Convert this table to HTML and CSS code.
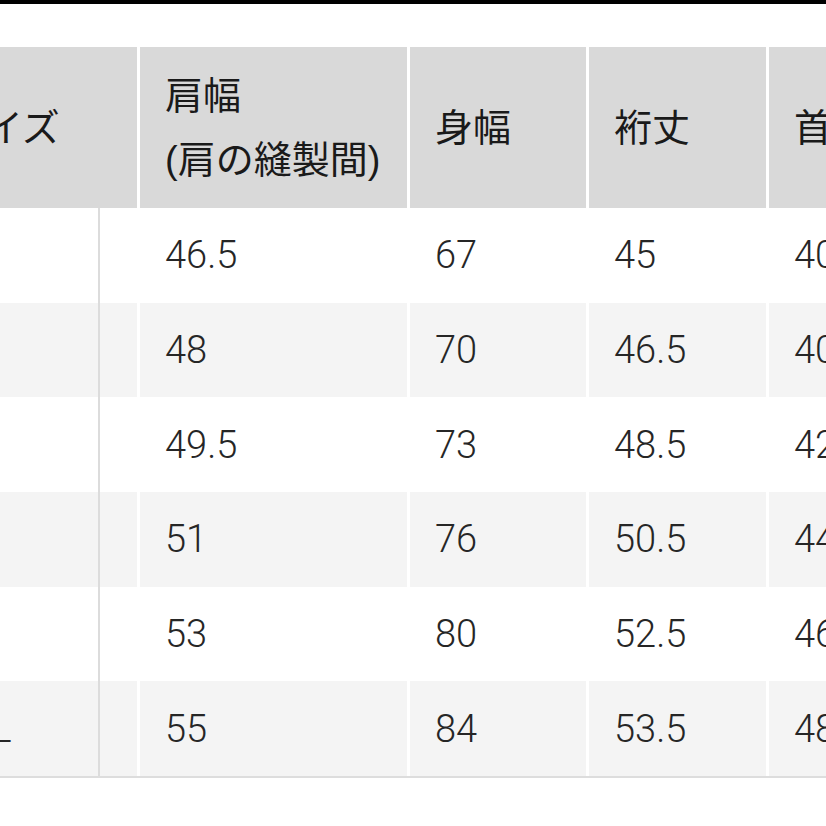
FILE: index.html
```html
<!DOCTYPE html>
<html lang="ja">
<head>
<meta charset="utf-8">
<link rel="stylesheet" href="styles.css">
</head>
<body>
<div class="topbar"></div>
<div class="chart">
  <div class="row head">
    <div class="cell label-head">サイズ</div>
    <div class="cell">肩幅<br>(肩の縫製間)</div>
    <div class="cell">身幅</div>
    <div class="cell">裄丈</div>
    <div class="cell">首周り</div>
  </div>
  <div class="row">
    <div class="cell label">XS</div><div class="cell spacer"></div>
    <div class="cell">46.5</div><div class="cell">67</div><div class="cell">45</div><div class="cell">40</div>
  </div>
  <div class="row alt">
    <div class="cell label">S</div><div class="cell spacer"></div>
    <div class="cell">48</div><div class="cell">70</div><div class="cell">46.5</div><div class="cell">40</div>
  </div>
  <div class="row">
    <div class="cell label">M</div><div class="cell spacer"></div>
    <div class="cell">49.5</div><div class="cell">73</div><div class="cell">48.5</div><div class="cell">42</div>
  </div>
  <div class="row alt">
    <div class="cell label">L</div><div class="cell spacer"></div>
    <div class="cell">51</div><div class="cell">76</div><div class="cell">50.5</div><div class="cell">44</div>
  </div>
  <div class="row">
    <div class="cell label">XL</div><div class="cell spacer"></div>
    <div class="cell">53</div><div class="cell">80</div><div class="cell">52.5</div><div class="cell">46</div>
  </div>
  <div class="row alt">
    <div class="cell label">XXL</div><div class="cell spacer"></div>
    <div class="cell">55</div><div class="cell">84</div><div class="cell">53.5</div><div class="cell">48</div>
  </div>
</div>
</body>
</html>
```

FILE: styles.css
```css
html, body {
  margin: 0;
  padding: 0;
  background: #ffffff;
  overflow: hidden;
}
body {
  width: 826px;
  height: 826px;
  font-family: Roboto, "Liberation Sans", "Noto Sans CJK JP", sans-serif;
  font-weight: 300;
  font-size: 38px;
  color: #262626;
}
.topbar {
  height: 4px;
  background: #000;
}
.chart {
  margin-top: 43px;
  margin-left: -80px;
  width: 1100px;
  border-bottom: 2px solid #dddddd;
}
.row {
  display: grid;
  grid-template-columns: 180px 40px 270px 179px 180px 200px;
  height: 94.7px;
}
.row.alt {
  background: #f4f4f4;
}
.row.head {
  height: 161px;
  background: transparent;
  color: #1a1a1a;
  font-family: "Liberation Sans", "Noto Sans CJK JP", sans-serif;
  font-weight: 400;
  line-height: 64px;
}
.cell {
  box-sizing: border-box;
  display: flex;
  align-items: center;
  padding-left: 25px;
  border-right: 3px solid #ffffff;
  white-space: nowrap;
}
.head .cell {
  background: #d9d9d9;
}
.head .label-head {
  grid-column: span 2;
  padding-left: 27px;
}
.cell.label {
  border-right: 2px solid #dcdcdc;
}
.cell.spacer {
  padding-left: 0;
}
```
